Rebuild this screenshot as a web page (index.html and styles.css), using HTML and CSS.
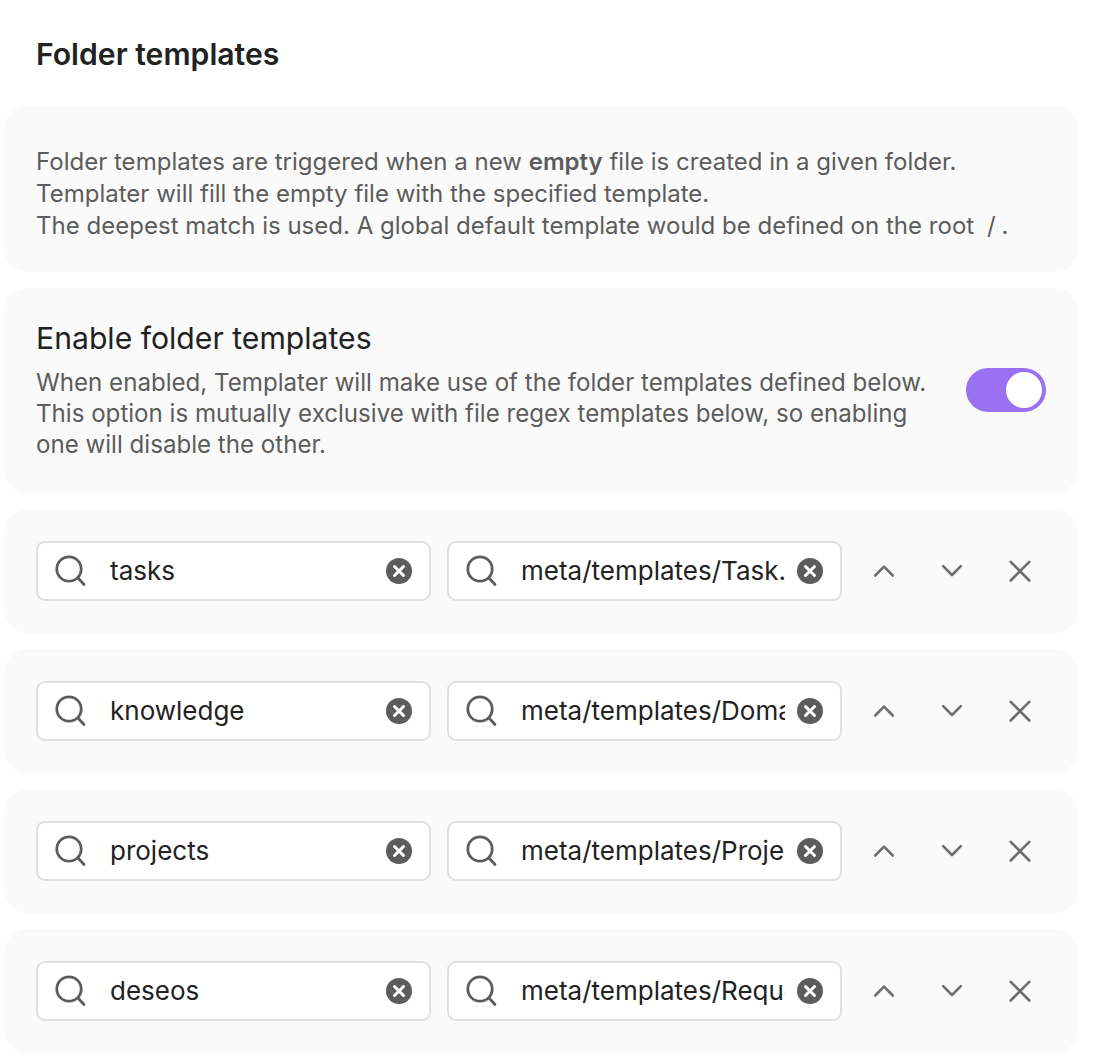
FILE: index.html
```html
<!DOCTYPE html>
<html lang="en">
<head>
    <meta charset="UTF-8">
    <meta name="viewport" content="width=device-width, initial-scale=1.0">
    <title>Folder templates</title>
    <link rel="stylesheet" href="styles.css">
</head>
<body>
    <svg class="icon-defs" width="0" height="0">
        <symbol id="i-search" viewBox="0 0 36 36">
            <circle cx="15" cy="16" r="12.200"/>
            <path d="M24 25l6 6.500"/>
        </symbol>
        <symbol id="i-clear" viewBox="0 0 26 26">
            <circle class="solid" cx="13" cy="13" r="13"/>
            <path class="cross" d="M8.500 8.500l9 9M17.500 8.500l-9 9"/>
        </symbol>
        <symbol id="i-up" viewBox="0 0 36 36">
            <path d="M9.200 22.500l8.800-8.800 8.800 8.800"/>
        </symbol>
        <symbol id="i-down" viewBox="0 0 36 36">
            <path d="M9.200 13.200l8.800 8.800 8.800-8.800"/>
        </symbol>
        <symbol id="i-close" viewBox="0 0 36 36">
            <path d="M8.700 8.900l18.600 18.600M27.300 8.900l-18.600 18.600"/>
        </symbol>
    </svg>

    <h2 class="section-title">Folder templates</h2>

    <div class="panel panel-intro">
        Folder templates are triggered when a new <strong>empty</strong> file is created in a given folder.<br>
        Templater will fill the empty file with the specified template.<br>
        The deepest match is used. A global default template would be defined on the root <code>/</code>.
    </div>

    <div class="panel panel-toggle">
        <div class="toggle-text">
            <div class="toggle-name">Enable folder templates</div>
            <div class="toggle-desc">When enabled, Templater will make use of the folder templates defined below. This option is mutually exclusive with file regex templates below, so enabling one will disable the other.</div>
        </div>
        <div class="switch"><span class="knob"></span></div>
    </div>

    <div class="panel panel-row">
        <div class="search"><svg class="ico-search"><use href="#i-search"/></svg><input class="search-value" type="text" value="tasks"><svg class="ico-clear"><use href="#i-clear"/></svg></div>
        <div class="search"><svg class="ico-search"><use href="#i-search"/></svg><input class="search-value" type="text" value="meta/templates/Task.md"><svg class="ico-clear"><use href="#i-clear"/></svg></div>
        <div class="actions">
            <svg class="ico-btn"><use href="#i-up"/></svg>
            <svg class="ico-btn"><use href="#i-down"/></svg>
            <svg class="ico-btn"><use href="#i-close"/></svg>
        </div>
    </div>

    <div class="panel panel-row">
        <div class="search"><svg class="ico-search"><use href="#i-search"/></svg><input class="search-value" type="text" value="knowledge"><svg class="ico-clear"><use href="#i-clear"/></svg></div>
        <div class="search"><svg class="ico-search"><use href="#i-search"/></svg><input class="search-value" type="text" value="meta/templates/Domain.md"><svg class="ico-clear"><use href="#i-clear"/></svg></div>
        <div class="actions">
            <svg class="ico-btn"><use href="#i-up"/></svg>
            <svg class="ico-btn"><use href="#i-down"/></svg>
            <svg class="ico-btn"><use href="#i-close"/></svg>
        </div>
    </div>

    <div class="panel panel-row">
        <div class="search"><svg class="ico-search"><use href="#i-search"/></svg><input class="search-value" type="text" value="projects"><svg class="ico-clear"><use href="#i-clear"/></svg></div>
        <div class="search"><svg class="ico-search"><use href="#i-search"/></svg><input class="search-value" type="text" value="meta/templates/Project.md"><svg class="ico-clear"><use href="#i-clear"/></svg></div>
        <div class="actions">
            <svg class="ico-btn"><use href="#i-up"/></svg>
            <svg class="ico-btn"><use href="#i-down"/></svg>
            <svg class="ico-btn"><use href="#i-close"/></svg>
        </div>
    </div>

    <div class="panel panel-row">
        <div class="search"><svg class="ico-search"><use href="#i-search"/></svg><input class="search-value" type="text" value="deseos"><svg class="ico-clear"><use href="#i-clear"/></svg></div>
        <div class="search"><svg class="ico-search"><use href="#i-search"/></svg><input class="search-value" type="text" value="meta/templates/Request.md"><svg class="ico-clear"><use href="#i-clear"/></svg></div>
        <div class="actions">
            <svg class="ico-btn"><use href="#i-up"/></svg>
            <svg class="ico-btn"><use href="#i-down"/></svg>
            <svg class="ico-btn"><use href="#i-close"/></svg>
        </div>
    </div>
</body>
</html>
```

FILE: styles.css
```css
html, body {
    margin: 0;
    padding: 0;
    height: 100%;
    overflow: hidden;
    background-color: #fff;
    font-family: Inter, sans-serif;
}
body {
    padding: 0 18px 0 4px;
}
.icon-defs {
    position: absolute;
}
.section-title {
    margin: 0;
    padding: 36px 0 0 32px;
    height: 106px;
    box-sizing: border-box;
    font-size: 30.17px;
    line-height: 36px;
    font-weight: 600;
    color: #222;
}
.panel {
    background-color: #fafafa;
    border-radius: 24px;
    margin-bottom: 16px;
    padding: 0 32px;
    box-sizing: border-box;
}
.panel-intro {
    height: 166px;
    padding-top: 40px;
    font-size: 24.04px;
    line-height: 31.75px;
    color: #5c5c5c;
}
.panel-intro strong {
    font-weight: 600;
}
.panel-intro code {
    font-family: inherit;
    padding: 0 6px;
}
.panel-toggle {
    height: 205px;
    display: flex;
    align-items: center;
    justify-content: space-between;
    gap: 36px;
    padding-bottom: 1px;
}
.toggle-name {
    font-size: 30.17px;
    line-height: 34px;
    color: #222;
}
.toggle-desc {
    margin-top: 12px;
    font-size: 24.12px;
    line-height: 31px;
    color: #5c5c5c;
}
.switch {
    flex: none;
    width: 80px;
    height: 44px;
    padding: 4px;
    box-sizing: border-box;
    border-radius: 22px;
    background-color: #9a71f0;
    display: flex;
    justify-content: flex-end;
}
.knob {
    width: 36px;
    height: 36px;
    border-radius: 50%;
    background-color: #fff;
}
.panel-row {
    height: 124px;
    display: flex;
    align-items: center;
    gap: 16px;
}
.search {
    flex: none;
    width: 395px;
    height: 60px;
    box-sizing: border-box;
    border: 2px solid #e0e0e0;
    border-radius: 9px;
    background-color: #fff;
    display: flex;
    align-items: center;
    padding: 0 17px 0 16px;
}
.ico-search {
    flex: none;
    width: 36px;
    height: 36px;
    fill: none;
    stroke: #5c5c5c;
    stroke-width: 2.800;
    stroke-linecap: round;
}
.search-value {
    flex: 1;
    min-width: 0;
    margin: 0 12px 2px 20px;
    padding: 0;
    border: none;
    outline: none;
    background: transparent;
    font-family: inherit;
    font-size: 26px;
    color: #222;
}
.ico-clear {
    flex: none;
    width: 26px;
    height: 26px;
}
.solid {
    fill: #5c5c5c;
}
.cross {
    fill: none;
    stroke: #fff;
    stroke-width: 3;
    stroke-linecap: round;
}
.actions {
    display: flex;
    gap: 32px;
    margin-left: 8px;
}
.ico-btn {
    flex: none;
    width: 36px;
    height: 36px;
    fill: none;
    stroke: #6e6e6e;
    stroke-width: 2.600;
    stroke-linecap: round;
    stroke-linejoin: round;
}
```
